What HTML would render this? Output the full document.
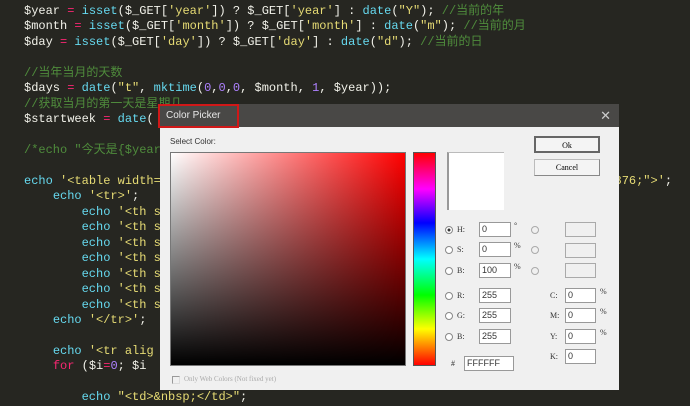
<!DOCTYPE html>
<html><head><meta charset="utf-8"><style>
*{margin:0;padding:0;box-sizing:border-box}
body{width:690px;height:405px;overflow:hidden;background:#262621;position:relative;font-family:"Liberation Mono","Noto Sans CJK SC",monospace}
.code{position:absolute;left:24px;top:4px;font-size:12px;line-height:15.45px;color:#f2f2ea;white-space:pre}
.p{color:#f92672}.f{color:#66d9ef}.s{color:#e6db74}.c{color:#4f8c3c}.n{color:#ae81ff}
.dlg{position:absolute;left:160px;top:104px;width:459px;height:286px;background:#f0f0f0;font-family:"Liberation Sans",sans-serif}
.tb{height:23px;background:#494846;color:#e8e8e8;font-size:10px;line-height:23px;padding-left:6px;position:relative}
.x{position:absolute;right:8px;top:0;font-size:13px;color:#ccc}
.red{position:absolute;left:158px;top:104px;width:81px;height:24px;border:2px solid #d01818}
.a{position:absolute}
.sq{left:10px;top:48px;width:236px;height:214px;background:linear-gradient(to top,#000,transparent),linear-gradient(to right,#fff,#f00);border:1px solid #777}
.hue{left:253px;top:48px;width:23px;height:214px;border:1px solid #555;background:linear-gradient(to bottom,#f00 0%,#f0f 17%,#00f 33%,#0ff 50%,#0f0 67%,#ff0 83%,#f00 100%)}
.pv{left:287px;top:48px;width:57px;height:58px;background:#fff;border-left:2px solid #999;border-top:1px solid #bbb}
.btn{left:374px;width:66px;height:17px;border:1px solid #888;background:#f4f4f4;font-size:8px;text-align:center;line-height:15px;font-family:"Liberation Serif",serif}
.in{width:32px;height:15px;border:1px solid #999;background:#fff;font-size:9px;line-height:13px;padding-left:2px;color:#333}
.lb{font-size:8px;color:#333;font-family:"Liberation Serif",serif}
.r{width:8px;height:8px;border:1px solid #888;border-radius:50%;background:#fff}
.dis{border-color:#aaa;background:#f0f0f0}
</style></head><body>
<div class="code">$year <span class="p">=</span> <span class="f">isset</span>($_GET[<span class="s">'year'</span>]) ? $_GET[<span class="s">'year'</span>] : <span class="f">date</span>(<span class="s">"Y"</span>); <span class="c">//当前的年</span>
$month <span class="p">=</span> <span class="f">isset</span>($_GET[<span class="s">'month'</span>]) ? $_GET[<span class="s">'month'</span>] : <span class="f">date</span>(<span class="s">"m"</span>); <span class="c">//当前的月</span>
$day <span class="p">=</span> <span class="f">isset</span>($_GET[<span class="s">'day'</span>]) ? $_GET[<span class="s">'day'</span>] : <span class="f">date</span>(<span class="s">"d"</span>); <span class="c">//当前的日</span>

<span class="c">//当年当月的天数</span>
$days <span class="p">=</span> <span class="f">date</span>(<span class="s">"t"</span>, <span class="f">mktime</span>(<span class="n">0</span>,<span class="n">0</span>,<span class="n">0</span>, $month, <span class="n">1</span>, $year));
<span class="c">//获取当月的第一天是星期几</span>
$startweek <span class="p">=</span> <span class="f">date</span>(

<span class="c">/*echo "今天是{$year</span>

<span class="f">echo</span> <span class="s">'&lt;table width=                                                               876;"&gt;'</span>;
    <span class="f">echo</span> <span class="s">'&lt;tr&gt;'</span>;
        <span class="f">echo</span> <span class="s">'&lt;th s</span>
        <span class="f">echo</span> <span class="s">'&lt;th s</span>
        <span class="f">echo</span> <span class="s">'&lt;th s</span>
        <span class="f">echo</span> <span class="s">'&lt;th s</span>
        <span class="f">echo</span> <span class="s">'&lt;th s</span>
        <span class="f">echo</span> <span class="s">'&lt;th s</span>
        <span class="f">echo</span> <span class="s">'&lt;th s</span>
    <span class="f">echo</span> <span class="s">'&lt;/tr&gt;'</span>;

    <span class="f">echo</span> <span class="s">'&lt;tr alig</span>
    <span class="p">for</span> ($i<span class="p">=</span><span class="n">0</span>; $i

        <span class="f">echo</span> <span class="s">"&lt;td&gt;&amp;nbsp;&lt;/td&gt;"</span>;</div>
<div class="dlg">
<div class="tb">Color Picker<span class="x">✕</span></div>
<div class="a lb" style="left:10px;top:33px;font-family:'Liberation Sans';font-size:8px">Select Color:</div>
<div class="a sq"></div>
<div class="a hue"></div>
<div class="a pv"></div>
<div class="a btn" style="top:32px;border:2px solid #666">Ok</div>
<div class="a btn" style="top:55px;border-color:#bbb #888 #888 #bbb">Cancel</div>
<div class="a r" style="left:285px;top:122px;background:radial-gradient(#333 30%,#fff 40%)"></div><div class="a lb" style="left:297px;top:121px">H:</div><div class="a in" style="left:319px;top:118px">0</div><div class="a lb" style="left:354px;top:117px">°</div>
<div class="a r" style="left:285px;top:142px"></div><div class="a lb" style="left:297px;top:141px">S:</div><div class="a in" style="left:319px;top:138px">0</div><div class="a lb" style="left:354px;top:137px">%</div>
<div class="a r" style="left:285px;top:163px"></div><div class="a lb" style="left:297px;top:162px">B:</div><div class="a in" style="left:319px;top:159px">100</div><div class="a lb" style="left:354px;top:158px">%</div>
<div class="a r" style="left:285px;top:188px"></div><div class="a lb" style="left:297px;top:187px">R:</div><div class="a in" style="left:319px;top:184px">255</div>
<div class="a r" style="left:285px;top:208px"></div><div class="a lb" style="left:297px;top:207px">G:</div><div class="a in" style="left:319px;top:204px">255</div>
<div class="a r" style="left:285px;top:229px"></div><div class="a lb" style="left:297px;top:228px">B:</div><div class="a in" style="left:319px;top:225px">255</div>
<div class="a lb" style="left:291px;top:255px">#</div><div class="a in" style="left:304px;top:252px;width:50px">FFFFFF</div>
<div class="a r dis" style="left:371px;top:122px"></div><div class="a in dis" style="left:405px;top:118px;width:31px"></div>
<div class="a r dis" style="left:371px;top:142px"></div><div class="a in dis" style="left:405px;top:139px;width:31px"></div>
<div class="a r dis" style="left:371px;top:163px"></div><div class="a in dis" style="left:405px;top:159px;width:31px"></div>
<div class="a lb" style="left:390px;top:187px">C:</div><div class="a in" style="left:405px;top:184px;width:31px">0</div><div class="a lb" style="left:440px;top:183px">%</div>
<div class="a lb" style="left:390px;top:207px">M:</div><div class="a in" style="left:405px;top:204px;width:31px">0</div><div class="a lb" style="left:440px;top:203px">%</div>
<div class="a lb" style="left:390px;top:228px">Y:</div><div class="a in" style="left:405px;top:225px;width:31px">0</div><div class="a lb" style="left:440px;top:224px">%</div>
<div class="a lb" style="left:390px;top:248px">K:</div><div class="a in" style="left:405px;top:245px;width:31px">0</div>
<div class="a" style="left:12px;top:272px;width:8px;height:8px;border:1px solid #999;border-right-color:#ddd;border-bottom-color:#ddd"></div>
<div class="a lb" style="left:24px;top:271px;color:#aaa;font-size:7px">Only Web Colors (Not fixed yet)</div>
</div>
<div class="red"></div>
</body></html>
